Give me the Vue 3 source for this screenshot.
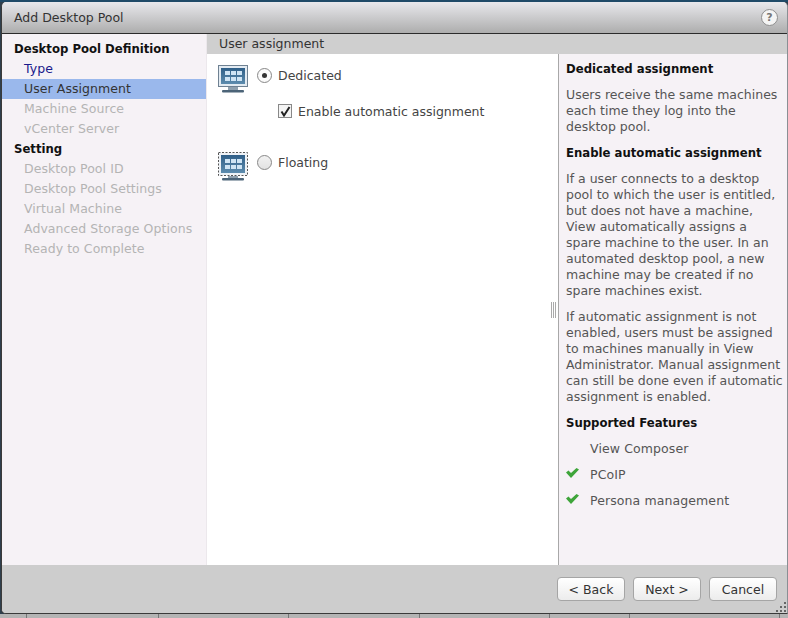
<script setup>
const nav = [
  { label: 'Desktop Pool Definition', kind: 'head' },
  { label: 'Type', kind: 'done' },
  { label: 'User Assignment', kind: 'active' },
  { label: 'Machine Source', kind: 'off' },
  { label: 'vCenter Server', kind: 'off' },
  { label: 'Setting', kind: 'head' },
  { label: 'Desktop Pool ID', kind: 'off' },
  { label: 'Desktop Pool Settings', kind: 'off' },
  { label: 'Virtual Machine', kind: 'off' },
  { label: 'Advanced Storage Options', kind: 'off' },
  { label: 'Ready to Complete', kind: 'off' },
]
const features = [
  { label: 'View Composer', ok: false },
  { label: 'PCoIP', ok: true },
  { label: 'Persona management', ok: true },
]
const ticks = [27, 132, 130, 131, 130, 80, 150]
const cells = [
  [7, 7], [13, 7], [19, 7],
  [7, 13], [13, 13], [19, 13],
]
</script>

<template>
  <div class="page">
    <div class="topline"></div>
    <div class="dialog">
      <header class="title">
        <span>Add Desktop Pool</span>
        <span class="help">?</span>
      </header>
      <div class="body">
        <nav class="nav">
          <div v-for="n in nav" :key="n.label" class="nav-row" :class="n.kind">{{ n.label }}</div>
        </nav>
        <div class="main">
          <div class="subhead">User assignment</div>
          <div class="columns">
            <section class="center">
              <div class="option first">
                <svg class="mon" width="30" height="29" viewBox="0 0 30 29">
                  <defs>
                    <linearGradient id="scr" x1="0" y1="0" x2="0" y2="1">
                      <stop offset="0" stop-color="#2f5f88"/>
                      <stop offset="1" stop-color="#5d8cae"/>
                    </linearGradient>
                  </defs>
                  <rect x="0.5" y="0.5" width="29" height="21" fill="#e3ebf2" stroke="#6f8192"/>
                  <rect x="3" y="3" width="24" height="16" fill="url(#scr)"/>
                  <rect v-for="(c, i) in cells" :key="i" :x="c[0]" :y="c[1] - 1" width="5" height="4" fill="#cfe4f4"/>
                  <rect x="10" y="22" width="10" height="3" fill="#8fa0ae"/>
                  <rect x="4" y="25" width="22" height="2.5" rx="1" fill="#4c6478"/>
                </svg>
                <span class="radio on"></span>
                <span class="opt-label">Dedicated</span>
              </div>
              <label class="check-row">
                <span class="check">
                  <svg width="11" height="11" viewBox="0 0 11 11"><path d="M1.5 5.5 L4 9.5 L9.5 1" fill="none" stroke="#222" stroke-width="2"/></svg>
                </span>
                <span>Enable automatic assignment</span>
              </label>
              <div class="option second">
                <svg class="mon" width="30" height="29" viewBox="0 0 30 29">
                  <rect x="0.5" y="0.5" width="29" height="23" fill="#eef2f6" stroke="#555" stroke-dasharray="2 1.5"/>
                  <rect x="3" y="3" width="24" height="18" fill="url(#scr)"/>
                  <rect v-for="(c, i) in cells" :key="i" :x="c[0]" :y="c[1]" width="5" height="4" fill="#cfe4f4"/>
                  <rect x="10" y="24" width="10" height="2" fill="#8fa0ae"/>
                  <rect x="4" y="26" width="22" height="2.5" rx="1" fill="#4c6478"/>
                </svg>
                <span class="radio"></span>
                <span class="opt-label">Floating</span>
              </div>
              <span class="splitter"></span>
            </section>
            <aside class="side">
              <h3>Dedicated assignment</h3>
              <p>Users receive the same machines each time they log into the desktop pool.</p>
              <h3>Enable automatic assignment</h3>
              <p>If a user connects to a desktop pool to which the user is entitled, but does not have a machine, View automatically assigns a spare machine to the user. In an automated desktop pool, a new machine may be created if no spare machines exist.</p>
              <p>If automatic assignment is not enabled, users must be assigned to machines manually in View Administrator. Manual assignment can still be done even if automatic assignment is enabled.</p>
              <h3>Supported Features</h3>
              <ul>
                <li v-for="f in features" :key="f.label">
                  <span class="tick">
                    <svg v-if="f.ok" width="13" height="10" viewBox="0 0 13 10"><path d="M0 4.5 L2.5 2.5 L5 5 L10.5 0 L13 1.5 L5 10 Z" fill="#3ea53a"/></svg>
                  </span>
                  {{ f.label }}
                </li>
              </ul>
            </aside>
          </div>
        </div>
      </div>
      <footer class="foot">
        <button>&lt; Back</button>
        <button>Next &gt;</button>
        <button>Cancel</button>
        <svg class="grip" width="12" height="12" viewBox="0 0 12 12" fill="#666">
          <rect x="9" y="1" width="2" height="2"/><rect x="5" y="5" width="2" height="2"/><rect x="9" y="5" width="2" height="2"/><rect x="1" y="9" width="2" height="2"/><rect x="5" y="9" width="2" height="2"/><rect x="9" y="9" width="2" height="2"/>
        </svg>
      </footer>
    </div>
    <div class="strip">
      <span v-for="(w, i) in ticks" :key="i" class="cell" :style="{ width: w + 'px' }"></span>
    </div>
  </div>
</template>

<style scoped>
.page {
  width: 788px;
  height: 618px;
  overflow: hidden;
  display: flex;
  flex-direction: column;
  background: #2f3f4d;
  font-family: "DejaVu Sans", Verdana, sans-serif;
  font-size: 12.5px;
  color: #444;
}
.topline { height: 2px; background: #1f4a68; flex: none; }
.dialog {
  flex: none;
  height: 612px;
  margin: 0 0 0 1px;
  width: 787px;
  border: 1px solid #3a3a3a;
  border-top: 0;
  border-right-color: #8a8f94;
  border-radius: 5px 5px 0 5px;
  box-sizing: border-box;
  display: flex;
  flex-direction: column;
  overflow: hidden;
  background: #cdcdcd;
}
.title {
  height: 32px;
  flex: none;
  box-sizing: border-box;
  display: flex;
  align-items: center;
  justify-content: space-between;
  padding: 0 9px 0 12px;
  background: linear-gradient(#e8e8ec, #adadad);
  border-bottom: 1px solid #2b2b2b;
  color: #333;
}
.help {
  width: 15px;
  height: 15px;
  border-radius: 50%;
  border: 1px solid #8e8e8e;
  background: #f4f4f4;
  color: #777;
  font-weight: bold;
  font-size: 11px;
  line-height: 15px;
  text-align: center;
}
.body { flex: 1; display: flex; min-height: 0; }
.nav {
  width: 205px;
  flex: none;
  box-sizing: border-box;
  padding-top: 5px;
  background: #f6f2f6;
  border-right: 1px solid #ece8ec;
}
.nav-row { height: 20px; line-height: 20px; padding-left: 22px; white-space: nowrap; letter-spacing: 0.06px; }
.nav-row.head { padding-left: 12px; font-weight: bold; color: #111; font-size: 11.7px; letter-spacing: 0; }
.nav-row.done { color: #1a1a8c; }
.nav-row.active { background: #9ab8ec; color: #333; }
.nav-row.off { color: #b4b4b4; }
.main { flex: 1; display: flex; flex-direction: column; min-width: 0; }
.subhead {
  height: 20px;
  line-height: 20px;
  background: #cfcfcf;
  color: #333;
  padding-left: 12px;
  flex: none;
}
.columns { flex: 1; display: flex; min-height: 0; }
.center {
  width: 351px;
  flex: none;
  background: #fff;
  position: relative;
  box-sizing: border-box;
  padding-left: 11px;
}
.option { display: flex; align-items: flex-start; }
.option.first { padding-top: 11px; }
.option.second { padding-top: 29px; }
.opt-label { margin-top: 3px; }
.mon { display: block; flex: none; }
.radio {
  width: 13px;
  height: 13px;
  margin: 3px 6px 0 9px;
  border-radius: 50%;
  border: 1px solid #888;
  background: linear-gradient(#f2f2f2, #e2e2e2);
  flex: none;
  position: relative;
}
.radio.on { background: #fafafa; }
.radio.on::after {
  content: "";
  position: absolute;
  left: 4px;
  top: 4px;
  width: 5px;
  height: 5px;
  border-radius: 50%;
  background: #333;
}
.check-row {
  display: flex;
  align-items: center;
  margin: 5px 0 0 60px;
  height: 24px;
}
.check {
  width: 12px;
  height: 12px;
  border: 1px solid #888;
  background: #f4f4f4;
  margin-right: 6px;
  display: flex;
  align-items: center;
  justify-content: center;
}
.splitter {
  position: absolute;
  right: 2px;
  top: 248px;
  width: 5px;
  height: 16px;
  border-left: 1px solid #aaa;
  border-right: 1px solid #aaa;
  background: linear-gradient(90deg, #fff 33%, #aaa 33%, #aaa 66%, #fff 66%);
  box-sizing: border-box;
}
.side {
  flex: 1;
  background: #f6f2f6;
  border-left: 1px solid #a8a8a8;
  box-sizing: border-box;
  padding: 7px 4px 0 7px;
  line-height: 16px;
  min-width: 0;
}
.side h3 { margin: 0 0 10px; font-size: 11.7px; color: #111; font-weight: bold; }
.side p { margin: 0 0 10px; color: #555; }
.side ul { list-style: none; margin: 0; padding: 0; }
.side li { height: 26px; line-height: 16px; display: flex; color: #555; letter-spacing: 0.1px; }
.tick { width: 24px; flex: none; display: flex; padding-top: 1px; }
.foot {
  height: 48px;
  flex: none;
  display: flex;
  justify-content: flex-end;
  align-items: flex-start;
  gap: 8px;
  padding: 12px 10px 0 0;
  box-sizing: border-box;
  position: relative;
  background: #cdcdcd;
}
.foot button {
  width: 68px;
  height: 24px;
  border: 1px solid #a5a5a5;
  border-radius: 4px;
  background: linear-gradient(#fff, #ececec);
  font: 12.5px "DejaVu Sans", Verdana, sans-serif;
  color: #333;
  padding: 0;
}
.grip { position: absolute; right: 0; bottom: 0; }
.strip { flex: 1; background: #b4b4b4; display: flex; }
.cell { flex: none; box-sizing: border-box; border-right: 1px solid #777; }
</style>
